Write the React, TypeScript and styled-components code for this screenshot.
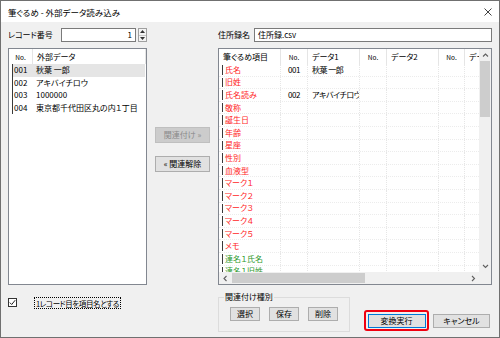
import React from 'react'
import styled, { createGlobalStyle } from 'styled-components'

const GlobalStyle = createGlobalStyle`
  html, body {
    margin: 0;
    padding: 0;
    background: #ffffff;
  }
  body {
    font-family: 'Noto Sans CJK JP', 'Noto Sans', sans-serif;
    font-size: 8px;
    color: #000000;
    font-feature-settings: 'palt';
  }
  * {
    box-sizing: border-box;
  }
`

interface ItemRow {
  label: string
  tone: 'red' | 'green'
  no?: string
  data?: string
}

const toneMap: any = {
  red: '#ff1e1e',
  green: '#2f9a2f',
}

const externalRows = [
  { no: '001', data: '秋葉 一郎' },
  { no: '002', data: 'アキバイチロウ' },
  { no: '003', data: '1000000' },
  { no: '004', data: '東京都千代田区丸の内１丁目' },
]

const items: ItemRow[] = [
  { label: '氏名', tone: 'red', no: '001', data: '秋葉 一郎' },
  { label: '旧姓', tone: 'red' },
  { label: '氏名読み', tone: 'red', no: '002', data: 'アキバイチロウ' },
  { label: '敬称', tone: 'red' },
  { label: '誕生日', tone: 'red' },
  { label: '年齢', tone: 'red' },
  { label: '星座', tone: 'red' },
  { label: '性別', tone: 'red' },
  { label: '血液型', tone: 'red' },
  { label: 'マーク１', tone: 'red' },
  { label: 'マーク２', tone: 'red' },
  { label: 'マーク３', tone: 'red' },
  { label: 'マーク４', tone: 'red' },
  { label: 'マーク５', tone: 'red' },
  { label: 'メモ', tone: 'red' },
  { label: '連名１氏名', tone: 'green' },
  { label: '連名１旧姓', tone: 'green' },
]

const gridColumns = '62px 27px 52px 27px 52px 26px 52px'

const Window = styled.div`
  width: 500px;
  height: 338px;
  background: #f0f0f0;
  border: 1px solid #707070;
  display: flex;
  flex-direction: column;
  overflow: hidden;
`

const TitleBar = styled.div`
  height: 21px;
  background: #ffffff;
  display: flex;
  align-items: center;
  padding: 0 7px;
`

const Title = styled.div`
  flex: 1;
  font-size: 8.5px;
  line-height: 10px;
`

const CloseIcon = styled.svg`
  width: 8px;
  height: 8px;
`

const Body = styled.div`
  display: grid;
  grid-template-columns: 139px 71px 274px;
  grid-template-rows: 16px 237px 1fr;
  row-gap: 5px;
  padding: 5px 7px 0 7px;
  flex: 1;
`

const FieldRow = styled.div`
  display: flex;
  align-items: center;
`

const FieldLabel = styled.div`
  flex: 1;
  line-height: 10px;
`

const TextInput = styled.div<{ width: number; align?: string }>`
  width: ${(p) => p.width}px;
  height: 14px;
  background: #ffffff;
  border: 1px solid #7a7a7a;
  display: flex;
  align-items: center;
  justify-content: ${(p) => (p.align === 'right' ? 'flex-end' : 'flex-start')};
  padding: 0 3px;
  line-height: 10px;
`

const Spinner = styled.div`
  width: 9px;
  height: 14px;
  margin-left: 2px;
  border: 1px solid #a0a0a0;
  background: #f4f4f4;
  display: flex;
  flex-direction: column;
`

const SpinHalf = styled.div<{ top?: boolean }>`
  flex: 1;
  display: flex;
  align-items: center;
  justify-content: center;
  border-bottom: ${(p) => (p.top ? '1px solid #c8c8c8' : 'none')};
`

const ListBox = styled.div`
  background: #ffffff;
  border: 1px solid #828790;
  overflow: hidden;
`

const ListHeader = styled.div`
  height: 15px;
  display: grid;
  grid-template-columns: 24px 1fr;
  align-items: stretch;
`

const HeadCell = styled.div<{ small?: boolean; center?: boolean }>`
  display: flex;
  align-items: center;
  justify-content: ${(p) => (p.center ? 'center' : 'flex-start')};
  padding-left: ${(p) => (p.center ? 0 : 4)}px;
  font-size: ${(p) => (p.small ? 6.5 : 8)}px;
  border-right: 1px solid #e5e5e5;
  white-space: nowrap;
  overflow: hidden;
`

const ListRow = styled.div<{ selected?: boolean }>`
  height: 12.6px;
  margin: 0 1px 0 3px;
  display: grid;
  grid-template-columns: 22px 1fr;
  align-items: center;
  border-left: 1px solid #3a3a3a;
  background: ${(p) => (p.selected ? '#e5e5e5' : 'transparent')};
  white-space: nowrap;
  line-height: 10px;
`

const ListCell = styled.div`
  padding-left: 1px;
  overflow: hidden;
`

const Middle = styled.div`
  display: flex;
  flex-direction: column;
  align-items: center;
  padding-top: 79px;
  gap: 13px;
`

const Button = styled.div<{ width: number; height?: number; disabled?: boolean; primary?: boolean }>`
  width: ${(p) => p.width}px;
  height: ${(p) => p.height || 14}px;
  flex: none;
  display: flex;
  align-items: center;
  justify-content: center;
  background: ${(p) => (p.disabled ? '#cccccc' : '#e1e1e1')};
  border: 1px solid ${(p) => (p.primary ? '#0078d7' : p.disabled ? '#bfbfbf' : '#adadad')};
  color: ${(p) => (p.disabled ? '#8a8a8a' : '#000000')};
  line-height: 10px;
  white-space: nowrap;
`

const GridFrame = styled.div`
  background: #ffffff;
  border: 1px solid #828790;
  display: grid;
  grid-template-columns: 1fr 12px;
  grid-template-rows: 1fr 12px;
  overflow: hidden;
`

const Viewport = styled.div`
  overflow: hidden;
`

const GridHeader = styled.div`
  height: 15px;
  display: grid;
  grid-template-columns: ${gridColumns};
  width: 298px;
`

const GridRow = styled.div`
  height: 12.6px;
  display: grid;
  grid-template-columns: ${gridColumns};
  width: 298px;
  border-bottom: 1px dotted #ececec;
  line-height: 10px;
`

const GridCell = styled.div<{ center?: boolean }>`
  display: flex;
  align-items: center;
  justify-content: ${(p) => (p.center ? 'center' : 'flex-start')};
  padding-left: ${(p) => (p.center ? 0 : 4)}px;
  border-right: 1px dotted #e6e6e6;
  letter-spacing: -0.5px;
  white-space: nowrap;
  overflow: hidden;
`

const ItemCell = styled.div`
  display: flex;
  align-items: stretch;
  padding: 1px 0 1px 3px;
  border-right: 1px dotted #e6e6e6;
  overflow: hidden;
`

const ItemLabel = styled.div<{ tone: string }>`
  flex: 1;
  display: flex;
  align-items: center;
  padding-left: 2px;
  border-left: 1px solid #3a3a3a;
  color: ${(p) => toneMap[p.tone]};
  white-space: nowrap;
`

const VScroll = styled.div`
  background: #f0f0f0;
  display: flex;
  flex-direction: column;
`

const HScroll = styled.div`
  background: #f0f0f0;
  display: flex;
  align-items: center;
`

const Arrow = styled.div`
  width: 12px;
  height: 12px;
  flex: none;
  display: flex;
  align-items: center;
  justify-content: center;
`

const VThumb = styled.div`
  height: 56px;
  margin: 0 1px;
  background: #cdcdcd;
`

const VTrack = styled.div`
  flex: 1;
`

const HThumb = styled.div`
  width: 133px;
  height: 10px;
  margin-left: 1px;
  background: #cdcdcd;
`

const HTrack = styled.div`
  flex: 1;
`

const Corner = styled.div`
  background: #f0f0f0;
`

const OptionRow = styled.div`
  display: flex;
  align-items: flex-start;
  padding-top: 4px;
`

const CheckBox = styled.div`
  width: 9px;
  height: 9px;
  margin-top: 4px;
  border: 1px solid #333333;
  background: #ffffff;
  display: flex;
  align-items: center;
  justify-content: center;
`

const CheckLabel = styled.div`
  margin-left: 17px;
  margin-top: 3px;
  padding: 0 1px;
  height: 12px;
  border: 1px dotted #000000;
  display: flex;
  align-items: center;
  font-size: 7.5px;
  letter-spacing: -0.4px;
  white-space: nowrap;
`

const BottomRight = styled.div`
  grid-column: 3;
  display: flex;
  align-items: flex-start;
  padding-top: 2px;
`

const GroupBox = styled.fieldset`
  width: 130px;
  height: 40px;
  flex: none;
  margin: 0;
  padding: 5px 11px 0 11px;
  border: 1px solid #dcdcdc;
  display: flex;
  gap: 9px;
  align-items: flex-start;
`

const GroupLegend = styled.legend`
  padding: 0 1px;
  margin-left: -6px;
  font-size: 8px;
  line-height: 10px;
`

const Highlight = styled.div`
  flex: none;
  margin: 18px 0 0 14px;
  padding: 1.5px;
  border: 2.5px solid #f00010;
  border-radius: 3px;
`

const Chevron = ({ dir }: { dir: 'up' | 'down' | 'left' | 'right' }) => {
  const paths: any = {
    up: 'M1 4.5 L3.5 2 L6 4.5',
    down: 'M1 2 L3.5 4.5 L6 2',
    left: 'M4.5 1 L2 3.5 L4.5 6',
    right: 'M2 1 L4.5 3.5 L2 6',
  }
  return (
    <svg width="7" height="7" viewBox="0 0 7 7">
      <path d={paths[dir]} fill="none" stroke="#606060" strokeWidth="1.1" />
    </svg>
  )
}

export default function App() {
  return (
    <>
      <GlobalStyle />
      <Window>
        <TitleBar>
          <Title>筆ぐるめ - 外部データ読み込み</Title>
          <CloseIcon viewBox="0 0 8 8">
            <path d="M0.5 0.5 L7.5 7.5 M7.5 0.5 L0.5 7.5" stroke="#111" strokeWidth="0.8" />
          </CloseIcon>
        </TitleBar>
        <Body>
          <FieldRow>
            <FieldLabel>レコード番号</FieldLabel>
            <TextInput width={75} align="right">1</TextInput>
            <Spinner>
              <SpinHalf top>
                <svg width="5" height="3" viewBox="0 0 5 3">
                  <path d="M0 3 L2.5 0 L5 3 Z" fill="#333" />
                </svg>
              </SpinHalf>
              <SpinHalf>
                <svg width="5" height="3" viewBox="0 0 5 3">
                  <path d="M0 0 L2.5 3 L5 0 Z" fill="#333" />
                </svg>
              </SpinHalf>
            </Spinner>
          </FieldRow>
          <div />
          <FieldRow>
            <FieldLabel>住所録名</FieldLabel>
            <TextInput width={238}>住所録.csv</TextInput>
          </FieldRow>

          <ListBox>
            <ListHeader>
              <HeadCell small center>No.</HeadCell>
              <HeadCell>外部データ</HeadCell>
            </ListHeader>
            {externalRows.map((row, index) => (
              <ListRow key={row.no} selected={index === 0}>
                <ListCell>{row.no}</ListCell>
                <ListCell>{row.data}</ListCell>
              </ListRow>
            ))}
          </ListBox>

          <Middle>
            <Button width={55} height={16} disabled>
              関連付け »
            </Button>
            <Button width={55} height={16}>
              « 関連解除
            </Button>
          </Middle>

          <GridFrame>
            <Viewport>
              <GridHeader>
                <HeadCell>筆ぐるめ項目</HeadCell>
                <HeadCell small center>No.</HeadCell>
                <HeadCell>データ1</HeadCell>
                <HeadCell small center>No.</HeadCell>
                <HeadCell>データ2</HeadCell>
                <HeadCell small center>No.</HeadCell>
                <HeadCell>データ3</HeadCell>
              </GridHeader>
              {items.map((item) => (
                <GridRow key={item.label}>
                  <ItemCell>
                    <ItemLabel tone={item.tone}>{item.label}</ItemLabel>
                  </ItemCell>
                  <GridCell center>{item.no}</GridCell>
                  <GridCell>{item.data}</GridCell>
                  <GridCell center />
                  <GridCell />
                  <GridCell center />
                  <GridCell />
                </GridRow>
              ))}
            </Viewport>
            <VScroll>
              <Arrow>
                <Chevron dir="up" />
              </Arrow>
              <VThumb />
              <VTrack />
              <Arrow>
                <Chevron dir="down" />
              </Arrow>
            </VScroll>
            <HScroll>
              <Arrow>
                <Chevron dir="left" />
              </Arrow>
              <HThumb />
              <HTrack />
              <Arrow>
                <Chevron dir="right" />
              </Arrow>
            </HScroll>
            <Corner />
          </GridFrame>

          <OptionRow>
            <CheckBox>
              <svg width="7" height="7" viewBox="0 0 7 7">
                <path d="M0.8 3.6 L2.7 5.5 L6.2 1.2" fill="none" stroke="#222" strokeWidth="1" />
              </svg>
            </CheckBox>
            <CheckLabel>1レコード目を項目名とする</CheckLabel>
          </OptionRow>
          <BottomRight>
            <GroupBox>
              <GroupLegend>関連付け種別</GroupLegend>
              <Button width={30}>選択</Button>
              <Button width={30}>保存</Button>
              <Button width={30}>削除</Button>
            </GroupBox>
            <Highlight>
              <Button width={58} primary>
                変換実行
              </Button>
            </Highlight>
            <Button width={57} style={{ marginLeft: 4, marginTop: 22 }}>
              キャンセル
            </Button>
          </BottomRight>
        </Body>
      </Window>
    </>
  )
}
